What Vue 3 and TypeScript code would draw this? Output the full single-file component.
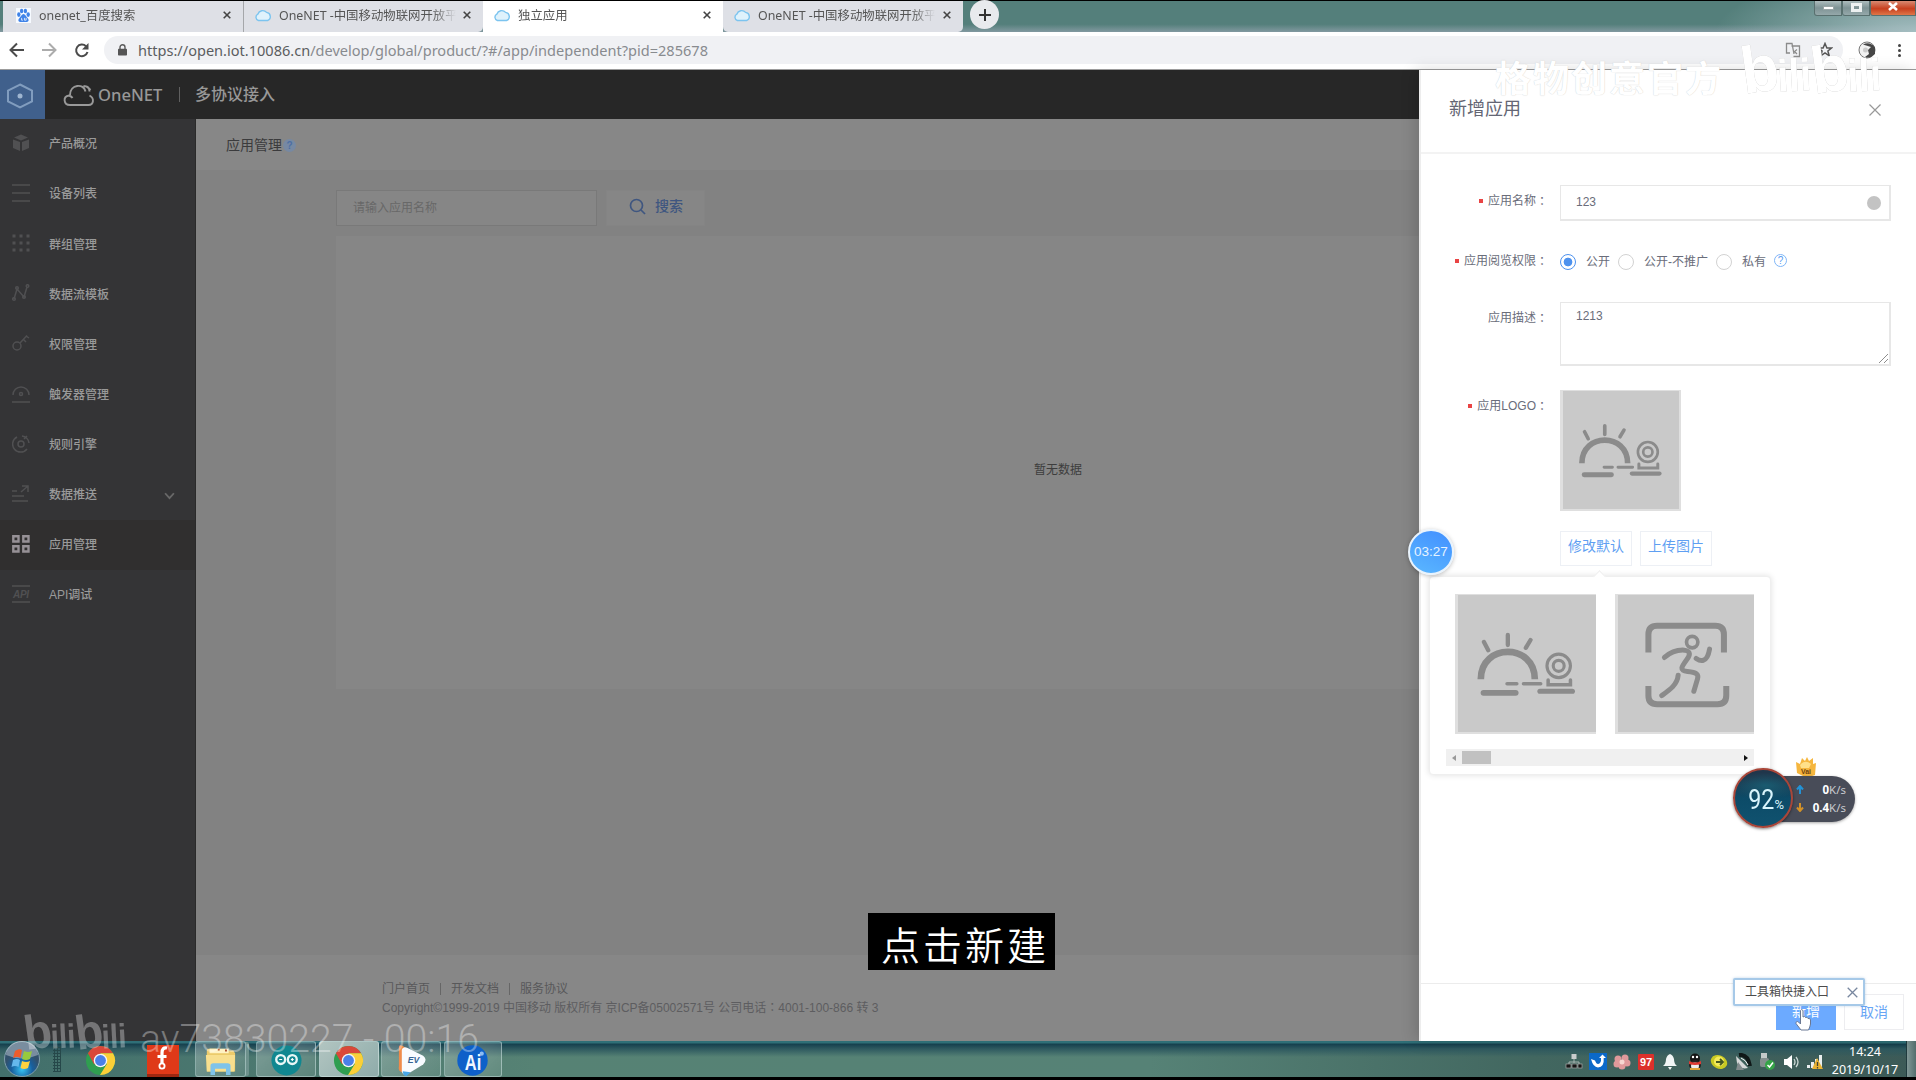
<script setup lang="ts">
interface Tab { title: string; icon: 'paw' | 'cloud'; active?: boolean }
interface MenuItem { label: string; icon: string; active?: boolean; expandable?: boolean }

const tabs: Tab[] = [
  { title: 'onenet_百度搜索', icon: 'paw' },
  { title: 'OneNET -中国移动物联网开放平', icon: 'cloud' },
  { title: '独立应用', icon: 'cloud', active: true },
  { title: 'OneNET -中国移动物联网开放平', icon: 'cloud' },
]

const menu: MenuItem[] = [
  { label: '产品概况', icon: 'cube' },
  { label: '设备列表', icon: 'list' },
  { label: '群组管理', icon: 'dots' },
  { label: '数据流模板', icon: 'flow' },
  { label: '权限管理', icon: 'key' },
  { label: '触发器管理', icon: 'trigger' },
  { label: '规则引擎', icon: 'rule' },
  { label: '数据推送', icon: 'push', expandable: true },
  { label: '应用管理', icon: 'apps', active: true },
  { label: 'API调试', icon: 'api' },
]

const tasks = ['folder', 'arduino', 'chrome', 'ev', 'ai']
const tray = ['net', 'bird', 'flower', 'red', 'bell', 'penguin', 'eye', 'dish', 'usb', 'sound', 'signal']
const scopes = ['公开', '公开-不推广', '私有']
const dotGrid = [2, 9, 16]
</script>

<template>
  <div class="screen">
    <svg class="defs" width="0" height="0">
      <defs>
        <symbol id="sun" viewBox="0 0 350 350">
          <g fill="none" stroke="#8b8b8b" stroke-linecap="round">
            <path d="M57 215C57 122 195 122 195 215" stroke-width="17" stroke-linecap="butt" />
            <path d="M126 102V128M65 120L76 141M184 115L172 135" stroke-width="11" />
            <circle cx="256" cy="181" r="30" stroke-width="8" />
            <circle cx="256" cy="181" r="14" stroke-width="8" />
            <path d="M229 217V229H286V217" stroke-width="9" />
            <path d="M124 227H149M166 227H210" stroke-width="9" />
            <path d="M64 250H146" stroke-width="15" />
            <path d="M208 246H291" stroke-width="13" />
          </g>
        </symbol>
        <symbol id="runner" viewBox="0 0 407 410">
          <g fill="none" stroke="#8b8b8b" stroke-linejoin="round">
            <path d="M91 172V118Q91 92 117 92H291Q317 92 317 118V172M91 272V301Q91 327 117 327H298Q324 327 324 301V272" stroke-width="18" />
            <g stroke-width="15" stroke-linecap="round">
              <circle cx="222" cy="141" r="17" stroke-width="11" />
              <path d="M139 187C158 170 177 164 198 165C220 168 215 181 206 193C190 215 182 226 208 229C235 232 242 237 238 251L227 288" />
              <path d="M180 240C178 268 155 284 131 301M274 162Q269 191 256 195Q247 199 234 190" />
            </g>
          </g>
        </symbol>
        <symbol id="cloud" viewBox="0 0 18 13">
          <path d="M4.4 11.5A3.4 3.4 0 0 1 3.8 5.2A5.2 5.2 0 0 1 12.6 3.4A4.2 4.2 0 0 1 13.6 11.5Z" fill="#dff2fc" stroke="#7cc4ef" stroke-width="1.4" />
        </symbol>
        <symbol id="chrome" viewBox="0 0 32 32">
          <circle cx="16" cy="16" r="15" fill="#2f9e50" />
          <path d="M3 8.5A15 15 0 0 1 29 8.5H16L9.5 20Z" fill="#d9483a" />
          <path d="M29 8.5A15 15 0 0 1 15.5 31L22.5 19.5L16 8.5Z" fill="#fbcf38" />
          <circle cx="16" cy="16" r="7" fill="#f4f4f4" /><circle cx="16" cy="16" r="5.6" fill="#4a80e8" />
        </symbol>
        <symbol id="bili" viewBox="0 0 144 62">
          <g font-family="Liberation Sans" font-weight="bold">
            <text x="6" y="57" font-size="66" textLength="38" lengthAdjust="spacingAndGlyphs" transform="rotate(-8 6 57)">b</text>
            <text x="40" y="55" font-size="46" textLength="34" lengthAdjust="spacingAndGlyphs" transform="rotate(-3 40 55)">ili</text>
            <text x="76" y="57" font-size="66" textLength="38" lengthAdjust="spacingAndGlyphs" transform="rotate(-8 76 57)">b</text>
            <text x="110" y="55" font-size="46" textLength="34" lengthAdjust="spacingAndGlyphs" transform="rotate(-3 110 55)">ili</text>
          </g>
        </symbol>
      </defs>
    </svg>

    <div class="tabstrip">
      <div v-for="(t, i) in tabs" :key="i" class="tab" :class="{ active: t.active }">
        <svg v-if="t.icon === 'paw'" class="paw" viewBox="0 0 16 16">
          <rect width="16" height="16" fill="#f6faff" />
          <g fill="#3f83e8"><ellipse cx="3" cy="7" rx="1.8" ry="2.5" /><ellipse cx="6" cy="3.2" rx="1.8" ry="2.5" /><ellipse cx="10" cy="3.2" rx="1.8" ry="2.5" /><ellipse cx="13" cy="7" rx="1.8" ry="2.5" /><path d="M8 6.5C10 6.5 10.5 9 12.5 10.8C14.5 13 13 15 10.8 15H5.2C3 15 1.5 13 3.5 10.8C5.5 9 6 6.5 8 6.5Z" /></g>
          <path d="M6 10.5V13H7.3M9 10.5V13H10.8V10.5" stroke="#fff" fill="none" stroke-width=".8" />
        </svg>
        <svg v-else class="tcloud"><use href="#cloud" /></svg>
        <span class="tab-title">{{ t.title }}</span>
        <svg class="tab-x" viewBox="0 0 8 8"><path d="M.7.7L7.3 7.3M7.3.7L.7 7.3" /></svg>
      </div>
      <div class="plus"><svg viewBox="0 0 12 12"><path d="M6 0V12M0 6H12" stroke="#333" stroke-width="2" /></svg></div>
      <div class="winctl">
        <span class="wc"><i class="min"></i></span>
        <span class="wc"><i class="max"></i></span>
        <span class="wc close"><svg viewBox="0 0 10 9"><path d="M1 1L9 8M9 1L1 8" stroke="#fff" stroke-width="2.6" /></svg></span>
      </div>
    </div>

    <div class="toolbar">
      <svg class="nav" viewBox="0 0 92 20">
        <g fill="none" stroke="#4b4b4b" stroke-width="2"><path d="M15 10H2M8 3.5L1.5 10L8 16.5" /><path d="M33 10H46M40 3.5L46.500 10L40 16.500" stroke="#acacac" /><path d="M77 6.200A5.800 5.800 0 1 0 78.500 12" /></g>
        <path d="M79.500 3V9.500H73Z" fill="#4b4b4b" />
      </svg>
      <div class="omnibox">
        <svg class="lock" viewBox="0 0 9 12"><path d="M2 5V3.300A2.500 2.500 0 0 1 7 3.300V5" fill="none" stroke="#5b5b5b" stroke-width="1.400" /><rect y="4.700" width="9" height="6.800" rx=".8" fill="#555" /></svg>
        <span class="url"><b>https://open.iot.10086.cn</b>/develop/global/product/?#/app/independent?pid=285678</span>
        <svg class="translate" viewBox="0 0 16 16"><path d="M5 11H1.500V1.500H7L9 12M6.500 4H14.500V14.500H8.500M12 7.500L9.500 9.500L12 12" fill="none" stroke="#8b8b8b" stroke-width="1.300" /></svg>
        <svg class="star" viewBox="0 0 16 16"><path d="M8 1.500L9.900 6H14.500L10.900 9L12.200 13.800L8 11L3.800 13.800L5.100 9L1.500 6H6.100Z" fill="none" stroke="#555" stroke-width="1.500" /></svg>
      </div>
      <svg class="avatar" viewBox="0 0 18 18"><circle cx="9" cy="9" r="8" fill="#f2f2f2" stroke="#777" /><path d="M5 3.500A8.500 8.500 0 0 1 17 6.500V13Q12 18 7 16L11 13L10 9L13 6Z" fill="#464646" /><circle cx="7.500" cy="9" r="2.500" fill="#ccc" /></svg>
      <div class="kebab"><i></i><i></i><i></i></div>
    </div>

    <div class="page">
      <header>
        <div class="hex"><svg viewBox="0 0 28 26"><path d="M14 1.500L26 7.500V18.500L14 24.500L2 18.500V7.500Z" fill="none" stroke="#819dbf" stroke-width="2" /><circle cx="14" cy="13" r="2.500" fill="#9eb5d0" /></svg></div>
        <svg class="brandcloud" viewBox="0 0 32 24"><path d="M26.500 12.500C31.500 15 31 22 25.500 22H7C.5 22-.5 13.500 6 12.500C7.500 13 9 14 9.500 15M7 12C7 1 21 0 22.500 8.500M20.500 3C23.500 3 26.500 4.500 26.500 8.500M24 3.500L27.500 7" fill="none" stroke="#999" stroke-width="1.900" /></svg>
        <span class="brand">OneNET</span><i class="bar"></i><span class="proto">多协议接入</span>
      </header>
      <div class="body">
        <nav class="side">
          <div v-for="m in menu" :key="m.label" class="item" :class="{ on: m.active }">
            <svg class="mi" viewBox="0 0 18 18" fill="none" stroke="currentColor" stroke-width="1.500">
              <path v-if="m.icon === 'cube'" d="M9 .5L16 3.500L9 6.500L2 3.500ZM1 5.500L8 8V17L1 14ZM17 5.500L10 8V17L17 14Z" fill="currentColor" stroke="none" />
              <path v-else-if="m.icon === 'list'" d="M0 1H18M0 9H18M0 17H18" />
              <template v-else-if="m.icon === 'dots'"><template v-for="y in dotGrid" :key="y"><rect v-for="x in dotGrid" :key="x" :x="x - 1.5" :y="y - 1.5" width="3" height="3" fill="currentColor" stroke="none" /></template></template>
              <g v-else-if="m.icon === 'flow'"><path d="M2 15L5 5L12 13L15 3" /><circle cx="2" cy="15" r="1.300" /><circle cx="5" cy="4" r="1.300" /><circle cx="12" cy="13" r="1.300" /><circle cx="15.500" cy="2" r="1.300" /></g>
              <g v-else-if="m.icon === 'key'"><circle cx="5" cy="12" r="4" /><path d="M8 9L15 1.500M11 5L14 8M14 2L17 4" /></g>
              <g v-else-if="m.icon === 'trigger'"><path d="M1 10A8 8 0 0 1 17 10M0 17H18" /><circle cx="9" cy="9" r="1.500" /></g>
              <g v-else-if="m.icon === 'rule'"><circle cx="9" cy="9" r="3" /><path d="M5 2A8 8 0 1 0 15 14M10 1A8 8 0 0 1 17 8M12 4L15 1" /></g>
              <path v-else-if="m.icon === 'push'" d="M0 6H5M0 11H12M0 16H16M9 7L16 1M10 1H16V7" />
              <path v-else-if="m.icon === 'apps'" d="M1.300 1.300H6.500V6.500H1.300ZM11.300 1.300H16.500V6.500H11.300ZM1.300 11.300H6.500V16.500H1.300ZM11.300 11.300H16.500V16.500H11.300Z" stroke-width="2.400" />
              <g v-else><path d="M0 1H18M0 17H18" /><text x="9" y="13" text-anchor="middle" font-size="10" font-weight="bold" font-style="italic" textLength="16" fill="currentColor" stroke="none">API</text></g>
            </svg>
            <span>{{ m.label }}</span>
            <svg v-if="m.expandable" class="chev" viewBox="0 0 10 7"><path d="M1 1L5 5.500L9 1" fill="none" stroke="#686868" stroke-width="1.700" /></svg>
          </div>
        </nav>
        <main>
          <h1>应用管理<i>?</i></h1>
          <div class="search">
            <div class="field">请输入应用名称</div>
            <div class="go"><svg viewBox="0 0 17 17"><circle cx="7.500" cy="7.500" r="6" fill="none" stroke="#3f5680" stroke-width="1.700" /><path d="M12 12L16 16" stroke="#3f5680" stroke-width="1.700" /></svg><span>搜索</span></div>
          </div>
          <div class="card">暂无数据</div>
          <footer>
            <div class="links"><span>门户首页</span><i></i><span>开发文档</span><i></i><span>服务协议</span></div>
            <div class="copy">Copyright©1999-2019 中国移动 版权所有 京ICP备05002571号 公司电话<span class="colon">：</span>4001-100-866 转 3</div>
          </footer>
        </main>
      </div>

      <aside class="drawer">
        <div class="dhead"><span>新增应用</span><svg viewBox="0 0 12 12"><path d="M.5.5L11.500 11.500M11.500.5L.5 11.500" stroke="#999" stroke-width="1.200" /></svg></div>
        <div class="form">
          <div class="row r1"><label><em></em>应用名称<span class="colon">：</span></label><div class="input">123<span class="clear"></span></div></div>
          <div class="row r2"><label><em></em>应用阅览权限<span class="colon">：</span></label>
            <div class="radios"><template v-for="(s, i) in scopes" :key="s"><i class="radio" :class="{ sel: i === 0 }"></i><span>{{ s }}</span></template><i class="help">?</i></div>
          </div>
          <div class="row r3"><label>应用描述<span class="colon">：</span></label><div class="area">1213<svg viewBox="0 0 9 9"><path d="M0 9L9 0M5 9L9 5" stroke="#8d8d8d" /></svg></div></div>
          <div class="row r4"><label><em></em>应用LOGO<span class="colon">：</span></label>
            <div class="logocol">
              <div class="tile"><svg><use href="#sun" /></svg></div>
              <div class="btns"><span>修改默认</span><span>上传图片</span></div>
            </div>
          </div>
        </div>
        <div class="dfoot"><span class="ok">新增</span><span class="cancel">取消</span></div>
        <div class="pop">
          <i class="arrow"></i>
          <div class="choices"><div class="tile big"><svg><use href="#sun" /></svg></div><div class="tile big second"><svg><use href="#runner" /></svg></div></div>
          <div class="scroll"><i class="l"></i><i class="thumb"></i><i class="r"></i></div>
        </div>
      </aside>
    </div>

    <div class="taskbar">
      <svg class="orb" viewBox="0 0 38 36">
        <defs><radialGradient id="og" cx=".5" cy=".8"><stop offset="0" stop-color="#36c3f4" /><stop offset=".6" stop-color="#185f9e" /><stop offset="1" stop-color="#32516c" /></radialGradient></defs>
        <circle cx="19" cy="18" r="17.500" fill="url(#og)" stroke="#7f9eab" /><path d="M3 14A16 14 0 0 1 35 14Q19 21 3 14Z" fill="#fff" opacity=".35" />
        <path d="M12 10Q16 7 19 9L17.500 17Q14 15 10 17Z" fill="#ed5c2c" /><path d="M21 10Q25 12 29 10L27 18Q23 20 19 18Z" fill="#97c93d" /><path d="M10 19Q14 17 17 19L15.500 26Q12 24 8.500 26Z" fill="#65b8ec" /><path d="M19 20Q23 22 27 20L25 27Q21 29 17.500 27Z" fill="#ffd23f" />
      </svg>
      <i class="grip"></i>
      <svg class="c1"><use href="#chrome" /></svg>
      <div class="flash"><svg viewBox="0 0 32 32"><path d="M20 5Q15 4 15 10V22M10.500 13.500H19.500" fill="none" stroke="#fff" stroke-width="3.200" /><circle cx="15" cy="23" r="2.600" fill="#df3918" stroke="#fff" stroke-width="1.800" /></svg></div>
      <div v-for="t in tasks" :key="t" class="task" :class="t">
        <svg v-if="t === 'folder'" viewBox="0 0 34 32"><path d="M2 5Q2 3 4 3H12L14 5H31L33 8V28H2Z" fill="#eccb6b" /><path d="M5 3H26V8H5Z" fill="#fff2c2" /><path d="M1 10H33L32 28H2Z" fill="#f8df8e" /><path d="M6 32V22Q6 19 9 19H25Q28 19 28 22V32H23V25H11V32Z" fill="#7fc3e9" /><path d="M14 4h2M22 5h2" stroke="#a84428" stroke-width="2" /></svg>
        <svg v-else-if="t === 'arduino'" viewBox="0 0 32 32"><circle cx="16" cy="16" r="15.500" fill="#108790" /><g fill="none" stroke="#e8f7f6" stroke-width="2.400"><circle cx="10" cy="15" r="4.600" /><circle cx="22" cy="15" r="4.600" /></g><path d="M8.500 15H11.500M20.500 15H23.500M22 13.500V16.500" stroke="#fff" stroke-width="1.200" /></svg>
        <svg v-else-if="t === 'chrome'"><use href="#chrome" /></svg>
        <svg v-else-if="t === 'ev'" viewBox="0 0 32 32"><path d="M3 2Q3-1 7 1L18 8L6 28Q2 27 3 22Z" fill="#ef8b4b" /><path d="M6 5Q7 1 12 3L28 11Q33 15 28 20L12 30Q7 32 6 27Z" fill="#f8fbff" /><path d="M7 27L15 28L11 32Q7 32 7 27Z" fill="#48a6e7" /><text x="18" y="19" text-anchor="middle" font-size="9" font-style="italic" font-weight="bold" fill="#356394">EV</text></svg>
        <svg v-else viewBox="0 0 32 32"><circle cx="16" cy="16" r="15.700" fill="#0e60c9" /><text x="16.500" y="26" text-anchor="middle" font-size="23" font-weight="bold" textLength="17" lengthAdjust="spacingAndGlyphs" fill="#f2f8ff">Ai</text><circle cx="25.500" cy="9" r="2.200" fill="#8dbcf2" /></svg>
      </div>
      <div class="tray">
        <svg v-for="n in tray" :key="n" viewBox="0 0 18 18">
          <g v-if="n === 'net'"><path d="M9 4V10M4 13V9H14V13" stroke="#a7b4b0" fill="none" /><rect x="6.500" y="1" width="5" height="5" fill="#c9cccc" /><rect x="1" y="11" width="5" height="4" fill="#151515" stroke="#aaa" stroke-width=".7" /><rect x="7" y="11" width="5" height="4" fill="#151515" stroke="#aaa" stroke-width=".7" /><rect x="13" y="11" width="4" height="4" fill="#151515" stroke="#aaa" stroke-width=".7" /></g>
          <g v-else-if="n === 'bird'"><rect x="0" y="0" width="18" height="17" fill="#0b69c9" /><path d="M2 6L6 7.500Q8 13 11 10Q12.500 8 12 5H10L13.500 1.500L17 5H14.700Q15.500 14 9 14.500Q4 14 2 6Z" fill="#fff" /></g>
          <g v-else-if="n === 'flower'" fill="#df999b"><circle cx="5" cy="6" r="3.500" /><circle cx="12" cy="5" r="3.500" /><circle cx="14" cy="10" r="3.500" /><circle cx="4" cy="11" r="3.500" /><circle cx="9" cy="13" r="3.500" /><circle cx="9" cy="9" r="2.500" fill="#f6d6d1" /></g>
          <g v-else-if="n === 'red'"><rect x="1" y="1" width="16" height="16" rx="1" fill="#dc312b" /><text x="9" y="13" font-size="11" font-weight="bold" text-anchor="middle" fill="#fff">97</text></g>
          <path v-else-if="n === 'bell'" d="M2 13Q5 11 5 6Q6 2 9 1Q12 2 13 6Q13 11 16 13ZM7 14H11L9 17Z" fill="#f1f5f5" />
          <g v-else-if="n === 'penguin'"><ellipse cx="9" cy="5.500" rx="5" ry="5" fill="#151515" /><ellipse cx="9" cy="12" rx="6" ry="5" fill="#222" /><ellipse cx="9" cy="13" rx="4" ry="3.500" fill="#eee" /><path d="M3 8Q9 11 15 8V11Q9 13 3 11Z" fill="#df3932" /><path d="M4 16H14" stroke="#dfa23a" stroke-width="2" /><circle cx="7" cy="4" r="1.200" fill="#fff" /><circle cx="11" cy="4" r="1.200" fill="#fff" /></g>
          <g v-else-if="n === 'eye'"><ellipse cx="9" cy="9" rx="8.500" ry="6.500" transform="rotate(25 9 9)" fill="#c8c923" /><circle cx="9" cy="8.500" r="5" fill="#f4ea59" /><path d="M6 9H13M10 6L13 9L10 12" stroke="#455822" stroke-width="1.800" fill="none" /></g>
          <g v-else-if="n === 'dish'"><path d="M5 2Q14 1 16 13" stroke="#101818" stroke-width="4" fill="none" /><path d="M2 3L14 15Q6 17 3 10Z" fill="#d6d8d9" /><path d="M4 9L2 17H10Z" fill="#828b8d" /><path d="M7 5Q12 7 14 12" stroke="#fff" fill="none" /></g>
          <g v-else-if="n === 'usb'"><rect x="3" y="0" width="6" height="6" fill="#c5cac9" /><rect x="2" y="5" width="9" height="9" rx="2" fill="#858f8e" /><circle cx="12" cy="12" r="5" fill="#35a447" /><path d="M9.500 12L11.500 14L15 9.500" stroke="#fff" stroke-width="1.500" fill="none" /></g>
          <g v-else-if="n === 'sound'"><path d="M2 6H5L10 2V16L5 12H2Z" fill="#fff" /><path d="M12 6Q14 9 12 12M14 4Q18 9 14 14" stroke="#cbd7d5" fill="none" stroke-width="1.300" /></g>
          <g v-else><path d="M1 15V12H4V15ZM5 15V9H8V15ZM9 15V6H12V15ZM13 15V2H16V15Z" fill="#e9eeee" /><path d="M11 5L17 16H6Z" fill="#e8b233" /><path d="M11.500 9V13M11.500 14V15.500" stroke="#443" stroke-width="1.300" /></g>
        </svg>
      </div>
      <div class="clock"><span>14:24</span><span>2019/10/17</span></div>
      <i class="peek"></i>
    </div>

    <div class="timer">03:27</div>

    <div class="meter">
      <svg class="crown" viewBox="0 0 22 22"><path d="M2 17L1 6L5 8L7 2L10 5L12 1L14 5L18 2L18 8L21 7L20 19Q11 23 2 17Z" fill="#f5b63e" /><path d="M5 9Q10 3 16 8L14 12H6Z" fill="#ffe089" /><text x="11" y="18" font-size="7" font-weight="bold" text-anchor="middle" fill="#70420d">Vai</text></svg>
      <div class="pill">
        <div><svg viewBox="0 0 8 9"><path d="M4 9V2M1 4.500L4 1L7 4.500" fill="none" stroke="#2292d6" stroke-width="2" /></svg><span><b>0</b>K/s</span></div>
        <div><svg viewBox="0 0 8 9"><path d="M4 0V7M1 4.500L4 8L7 4.500" fill="none" stroke="#d29128" stroke-width="2" /></svg><span><b>0.4</b>K/s</span></div>
      </div>
      <div class="dial"><span>92</span><small>%</small></div>
    </div>

    <div class="tip"><span>工具箱快捷入口</span><svg viewBox="0 0 11 11"><path d="M.7.7L10.300 10.300M10.300.7L.7 10.300" stroke="#78879f" stroke-width="1.300" /></svg></div>
    <svg class="hand" viewBox="0 0 17 23"><path d="M5.500 14V2.500Q6.500.5 8 2.500V9Q9.500 7.500 10.500 9.500Q12 8.500 13 10.500Q15 9.500 15.500 12V16Q15 19 13.500 22H6L1 15.500Q1 12.500 3.500 14L5.500 16Z" fill="#fff" stroke="#6a7893" /></svg>

    <div class="caption">点击新建</div>

    <div class="wm-top">格物创意官方</div>
    <svg class="bili bili-top"><use href="#bili" /></svg>
    <svg class="bili bili-bottom"><use href="#bili" /></svg>
    <div class="wm-bottom">av73830227 - 00:16</div>
  </div>
</template>

<style>
body { margin: 0; overflow: hidden; }
</style>

<style scoped>
* { box-sizing: border-box; }
i, em { font-style: normal; }
svg { display: block; flex: none; }
.defs { position: absolute; }
.colon { font-family: "Noto Sans CJK TC", sans-serif; }
.screen { position: relative; width: 1916px; height: 1080px; background: #000; padding: 1px 0 2px; display: flex; flex-direction: column; overflow: hidden; white-space: nowrap; font: 12px/1.2 "Liberation Sans", "Noto Sans CJK SC", sans-serif; }

.tabstrip { height: 31px; flex: none; display: flex; align-items: flex-start; padding-left: 3px; background: radial-gradient(ellipse 200px 60px at 100% 100%, #a4bdc0, transparent), linear-gradient(#547f7b 75%, #8299a0); }
.tab { width: 240px; height: 31px; display: flex; align-items: center; padding: 0 9px 3px 10px; background: #dee0e6; color: #555; font: 12.400px "Noto Sans", "Noto Sans CJK SC", sans-serif; }
.tab:first-child { padding-left: 12px; }
.tab:nth-child(2) { border-left: 1px solid #a5a7aa; border-bottom-right-radius: 5px; }
.tab:nth-child(4) { border-bottom-left-radius: 5px; border-bottom-right-radius: 5px; }
.tab.active { background: #fff; }
.paw { width: 15px; height: 15px; margin: 0 8px 0 1px; }
.tcloud { width: 18px; height: 13px; margin-right: 7px; }
.tab-title { mask-image: linear-gradient(90deg, #000 154px, transparent 177px); }
.tab-x { width: 8px; height: 8px; margin-left: auto; margin-right: 3px; stroke: #444; stroke-width: 1.600; }
.plus { width: 29px; height: 29px; margin: -1px 0 0 7px; border-radius: 50%; background: #e8eaed; display: flex; align-items: center; justify-content: center; }
.plus svg { width: 12px; }
.winctl { margin-left: auto; display: flex; height: 15px; }
.wc { width: 28px; border: 1px solid #59706f; border-top: 0; background: linear-gradient(#adbcbd, #7e9395 50%, #95a8aa); display: flex; align-items: center; justify-content: center; border-bottom-left-radius: 3px; }
.wc.close { width: 46px; background: linear-gradient(#d88a72, #c7401f 55%, #df7648); }
.wc.close svg { width: 10px; height: 9px; margin-bottom: 3px; }
.min { width: 11px; height: 4px; background: #fff; border: 1px solid #9aa5a6; }
.max { width: 11px; height: 9px; border: 3px solid #edf1f1; margin-bottom: 2px; }

.toolbar { height: 37px; flex: none; display: flex; align-items: center; background: #fff; padding: 0 15px 1px 9px; }
.nav { width: 92px; height: 20px; }
.omnibox { width: 1739px; height: 28px; margin-left: 3px; border-radius: 14px; background: #f0f1f4; display: flex; align-items: center; padding: 0 10px 0 14px; }
.lock { width: 9px; height: 12px; }
.url { margin-left: 11px; font: 14.550px "Noto Sans", sans-serif; color: #888b8f; margin-top: -1px; }
.url b { font-weight: 400; color: #5b5d60; }
.translate { width: 16px; height: 16px; margin-left: auto; }
.star { width: 16px; height: 16px; margin-left: 16px; }
.avatar { width: 18px; height: 18px; margin-left: 15px; }
.kebab { margin-left: auto; display: flex; flex-direction: column; gap: 2px; }
.kebab i { width: 3px; height: 3px; border-radius: 50%; background: #444; }

.page { position: relative; height: 972px; flex: none; border-top: 1px solid #9c9c9c; background: #858585; }
header { height: 49px; background: #272727; display: flex; align-items: center; color: #989898; }
.hex { width: 45px; height: 49px; background: #40608c; display: flex; align-items: center; padding: 2px 0 0 6px; }
.hex svg { width: 28px; height: 26px; }
.brandcloud { width: 32px; height: 24px; margin-left: 18px; }
.brand { margin-left: 3px; font: 500 16.600px "Noto Sans", sans-serif; width: 66px; }
.bar { width: 1px; height: 15px; margin: 0 15px; background: #606060; }
.proto { font-size: 16px; font-weight: 500; }
.body { display: flex; height: 922px; }
.side { width: 196px; background: #343436; border-right: 1px solid #2a2a2a; flex: none; }
.item { height: 50.100px; display: flex; align-items: center; padding: 0 20px 0 12px; color: #9a9a9a; }
.item.on { background: #302f2f; }
.mi { width: 18px; height: 18px; margin: 0 19px 2px 0; color: #505052; }
.on .mi { color: #969196; }
.item span { margin-top: 1px; font-weight: 500; }
.chev { width: 11px; height: 8px; margin-left: auto; margin-top: 3px; }
main { flex: 1; background: #828282; display: flex; flex-direction: column; }
h1 { margin: 0; height: 51px; flex: none; background: #878787; display: flex; align-items: center; padding: 2px 0 0 30px; font-size: 14px; font-weight: 400; color: #3b3b3d; }
h1 i { width: 13px; height: 13px; border-radius: 50%; background: #7789a3; color: #4d6fa4; font: bold 10px/13px "Liberation Sans", sans-serif; text-align: center; margin-left: 1px; }
.search { height: 66px; flex: none; padding: 20px 140px 0; display: flex; gap: 9px; }
.field { width: 261px; height: 36px; padding-left: 16px; background: #868686; border: 1px solid #797979; color: #686868; line-height: 34px; }
.go { width: 99px; height: 36px; background: #868686; color: #3f5680; display: flex; align-items: center; padding-left: 22px; gap: 9px; font-size: 14px; font-weight: 500; border: 1px solid #848484; }
.go svg { width: 17px; height: 17px; margin-bottom: 4px; }
.go span { margin-bottom: 3px; }
.card { height: 453px; margin: 0 136px 0 140px; background: #868686; color: #3d3d3d; display: flex; align-items: center; justify-content: center; padding-top: 16px; }
footer { margin-top: auto; height: 86px; background: #878787; padding: 25px 0 0 186px; color: #58585a; }
.links { display: flex; align-items: center; height: 18px; }
.links i { width: 1px; height: 12px; margin: 0 10px; background: #666; }
.copy { line-height: 18px; color: #5d5d60; }

.drawer { position: absolute; right: 0; top: 0; width: 497px; height: 971px; background: #fff; border-left: 2px solid #ededed; display: flex; flex-direction: column; box-shadow: -4px 0 14px rgba(0, 0, 0, .15); color: #6a6d7a; }
.dhead { height: 84px; border-bottom: 2px solid #f3f3f3; display: flex; align-items: center; justify-content: space-between; padding: 0 35px 3px 28px; font-size: 18px; color: #646674; }
.dhead svg { width: 12px; height: 12px; }
.form { flex: 1; padding-top: 31px; }
.row { display: flex; align-items: flex-start; }
.row label { width: 127px; flex: none; margin-right: 12px; display: flex; align-items: center; justify-content: flex-end; }
label em { width: 4px; height: 4px; background: #e94444; margin-right: 5px; }
.r1 { height: 66px; }
.r1 label { height: 32px; }
.input { width: 331px; height: 36px; border: 2px solid #e7e7e7; border-top-width: 1px; border-left-width: 1px; padding: 0 8px 0 15px; display: flex; align-items: center; justify-content: space-between; }
.clear { width: 14px; height: 14px; border-radius: 50%; background: #c3c3c3; }
.r2 { height: 51px; align-items: center; padding-bottom: 31px; }
.radios { display: flex; align-items: center; height: 20px; margin-top: 2px; }
.radio { width: 16px; height: 16px; border-radius: 50%; border: 1px solid #d2d2d2; margin-right: 10px; }
.radio.sel { border: 1px solid #4e92ee; background: radial-gradient(circle, #4e92ee 0 4px, #fff 4.700px); }
.radios span { margin-right: 8px; }
.help { width: 13px; height: 13px; border: 1px solid #80b6f7; border-radius: 50%; color: #5a9df2; font-size: 10px; line-height: 11px; text-align: center; margin-bottom: 4px; }
.r3 { height: 88px; }
.r3 label { height: 32px; }
.area { width: 331px; height: 64px; border: 2px solid #e7e7e7; border-top-width: 1px; border-left-width: 1px; padding: 6px 0 0 15px; position: relative; }
.area svg { position: absolute; right: 1px; bottom: 1px; width: 9px; height: 9px; }
.r4 label { height: 32px; }
.tile { width: 121px; height: 121px; background: #c9c9c9; border: 2px solid #dfdfdf; border-top-width: 1px; border-left-width: 3px; }
.tile svg { width: 100%; height: 100%; }
.btns { display: flex; gap: 8px; margin-top: 20px; }
.btns span { width: 72px; height: 35px; border: 1px solid #edf0f5; font-size: 14px; line-height: 29px; text-align: center; color: #5f9ff2; }
.dfoot { height: 58px; border-top: 1px solid #ececec; display: flex; justify-content: flex-end; gap: 8px; padding: 10px 12px; font-size: 14px; text-align: center; }
.dfoot span { width: 60px; height: 36px; line-height: 34px; }
.ok { background: #6caaff; color: #fff; }
.cancel { border: 1px solid #ededf0; color: #67a5f5; }
.pop { position: absolute; left: 8px; top: 506px; width: 342px; height: 199px; background: #fff; border: 1px solid #efefef; border-radius: 4px; box-shadow: 0 0 6px rgba(0, 0, 0, .13); padding: 17px 0 0 16px; }
.arrow { position: absolute; left: 165px; top: -5px; width: 9px; height: 9px; background: #fff; border: 1px solid #eee; border-right: 0; border-bottom: 0; transform: rotate(45deg); }
.choices { display: flex; gap: 19px; width: 308px; overflow: hidden; padding-left: 9px; }
.tile.big { width: 141px; height: 140px; flex: none; border-right: 0; border-top-width: 1px; }
.tile.big.second { width: 139px; }
.scroll { margin-top: 15px; width: 308px; height: 17px; background: #f0f0f0; display: flex; align-items: center; padding: 2px 6px; }
.l, .r { border: 3.500px solid transparent; border-left-width: 0; border-right: 4px solid #999; }
.r { margin-left: auto; border-right-width: 0; border-left: 4px solid #111; }
.thumb { width: 29px; height: 13px; margin-left: 6px; background: #c1c1c1; }

.taskbar { height: 36px; flex: none; display: flex; align-items: center; background: linear-gradient(#2f6f77 0 2px, #153f4d 3px, #2f5a60 8px, transparent 16px), linear-gradient(90deg, #426f6b, #568274 28%, #568276 60%, #426760 80%, #3c5a57); color: #fff; }
.orb { width: 38px; height: 36px; margin-left: 3px; }
.grip { width: 8px; height: 26px; margin-left: 12px; background: radial-gradient(circle, #26484a 1px, transparent 1.300px) 0 0 / 3px 3px; }
.c1 { width: 31px; height: 31px; margin: 3px 0 0 24px; }
.flash { width: 32px; height: 32px; margin: 4px 16px 0 31px; background: #df3918; border-bottom: 3px solid #9e2811; overflow: hidden; }
.flash svg { width: 32px; height: 32px; margin-top: -2px; }
.task { height: 36px; width: 60px; margin-right: 2.500px; border: 1px solid rgba(210, 235, 235, .4); border-radius: 3px; background: linear-gradient(135deg, rgba(255, 255, 255, .28), rgba(255, 255, 255, .08)); display: flex; align-items: center; justify-content: center; flex: none; padding-top: 2px; }
.task svg { width: 31px; height: 31px; }
.task.folder { width: 51px; margin-right: 10px; box-shadow: 4px 0 0 -1px #6d918c; }
.task.chrome { background: linear-gradient(135deg, #b2c5c1, #8facaa); }
.task.ai { width: 58px; }
.tray { display: flex; gap: 6.100px; margin-left: auto; padding-top: 5px; }
.tray svg { width: 18px; height: 18px; }
.clock { width: 82px; padding-right: 0; display: flex; flex-direction: column; align-items: center; font: 12.500px/18px "Noto Sans", sans-serif; padding-top: 3px; }
.peek { width: 10px; height: 36px; border-left: 1px solid #203b3e; background: linear-gradient(90deg, #819897, #536e6d); }

.timer { position: absolute; left: 1408px; top: 529px; width: 46px; height: 46px; border-radius: 50%; border: 2px solid #e9f3fc; background: linear-gradient(25deg, #5bb8ff, #418fff); box-shadow: 0 1px 4px rgba(0, 0, 0, .25); color: #e5f3ff; font: 13.500px/42px "Liberation Sans", sans-serif; text-align: center; }
.meter { position: absolute; left: 1733px; top: 755px; width: 123px; height: 75px; }
.crown { position: absolute; left: 62px; top: 1px; width: 22px; height: 22px; }
.pill { position: absolute; left: 30px; top: 21px; width: 92px; height: 46px; border-radius: 0 23px 23px 0; background: #484c58; box-shadow: 0 1px 3px rgba(0, 0, 0, .35); padding: 5px 9px 5px 33px; color: #c8cbd0; }
.pill div { display: flex; align-items: center; justify-content: space-between; height: 17.500px; font: 11.500px "Noto Sans", sans-serif; }
.pill svg { width: 8px; height: 9px; }
.pill b { color: #fff; }
.dial { position: absolute; left: 0; top: 13px; width: 60px; height: 60px; border-radius: 50%; background: radial-gradient(ellipse 35px 13px at 55% 28%, #1a5b70, transparent), linear-gradient(#20364b 15%, #0c4b68 50%, #10526f); border: 2px solid #a94639; box-shadow: 0 1px 3px rgba(0, 0, 0, .5); display: flex; align-items: baseline; justify-content: center; color: #d8f4fc; font: 27px/61px "Roboto", sans-serif; padding-left: 4px; }
.dial span { transform: scaleX(.86); margin-right: -2px; }
.dial small { font-size: 13px; }
.tip { position: absolute; left: 1733px; top: 978px; width: 132px; height: 28px; border: 2px solid #a6c9e8; border-radius: 2px; background: #fff; box-shadow: 0 0 3px rgba(100, 150, 200, .4); display: flex; align-items: center; justify-content: space-between; padding: 0 5px 0 10px; color: #4c4c4c; }
.tip svg { width: 11px; height: 11px; }
.hand { position: absolute; left: 1795px; top: 1008px; width: 17px; height: 23px; }
.caption { position: absolute; left: 868px; top: 913px; width: 187px; height: 57px; background: #000; color: #fff; font: 350 39px/60px "Noto Sans CJK SC", sans-serif; letter-spacing: 3px; padding-left: 13px; }
.wm-top { position: absolute; left: 1495px; top: 52px; color: #fff; font: 700 36px/48px "Noto Sans CJK SC", sans-serif; letter-spacing: 2px; text-shadow: 0 0 1px #c4c4c4; }
.bili { position: absolute; overflow: visible; }
.bili-top { left: 1738px; top: 37px; width: 144px; height: 62px; fill: #fff; filter: drop-shadow(0 0 .7px #bbb); }
.bili-bottom { left: 22px; top: 1008px; width: 105px; height: 46px; fill: #fff; opacity: .32; }
.wm-bottom { position: absolute; left: 140px; top: 1017px; font: 300 39.200px/44px "Roboto", sans-serif; color: rgba(255, 255, 255, .34); }
</style>
